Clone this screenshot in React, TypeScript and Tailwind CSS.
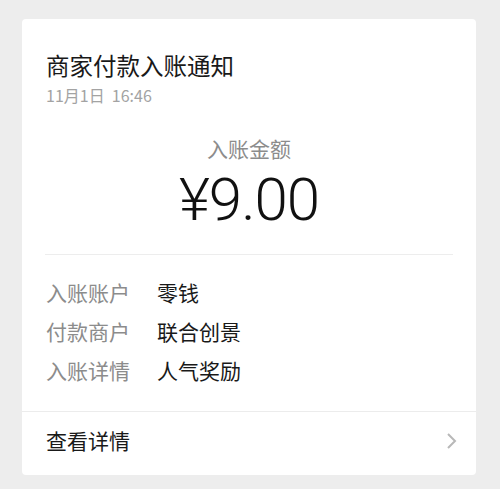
export default function App() {
  const cjk = { fontFamily: '"Noto Sans CJK SC", "Noto Sans", sans-serif' };
  const rows = [
    ["入账账户", "零钱"],
    ["付款商户", "联合创景"],
    ["入账详情", "人气奖励"],
  ];
  return (
    <div className="w-[500px] h-[489px] bg-[#ededed] pl-[22px] pt-[19px]" style={cjk}>
      <div className="w-[454px] h-[456px] bg-white rounded-[4px] flex flex-col">
        <div className="px-6 pt-[30px]">
          <div className="text-[23.5px] leading-[32px] text-[#191919]">商家付款入账通知</div>
          <div className="mt-[4px] text-[16px] leading-[20px] text-[#a3a3a3]">11月1日&nbsp;&nbsp;16:46</div>
        </div>
        <div className="mt-[29px] text-center text-[21px] leading-[28px] text-[#8c8c8c]">入账金额</div>
        <div
          className="mt-[6px] text-center text-[60px] leading-[64px] font-light text-[#111] tracking-[-1px]"
          style={{ fontFamily: 'Roboto, "Noto Sans", sans-serif' }}
        >
          ¥9.00
        </div>
        <div className="mt-[22px] mx-[23px] h-px bg-[#ededed]" />
        <div className="mt-[18px] px-6 flex flex-col">
          {rows.map(([k, v]) => (
            <div key={k} className="flex h-[39px] items-center text-[21px]">
              <div className="w-[111px] text-[#8c8c8c]">{k}</div>
              <div className="text-[#191919]">{v}</div>
            </div>
          ))}
        </div>
        <div className="mt-[21px] h-px bg-[#ececec]" />
        <div className="h-[58px] px-6 flex items-center justify-between">
          <div className="text-[21px] text-[#191919]">查看详情</div>
          <svg width="12" height="18" viewBox="0 0 12 18" className="mr-[-6px]">
            <polyline points="2,2 9,9 2,16" fill="none" stroke="#b8b8b8" strokeWidth="2" />
          </svg>
        </div>
      </div>
    </div>
  );
}
